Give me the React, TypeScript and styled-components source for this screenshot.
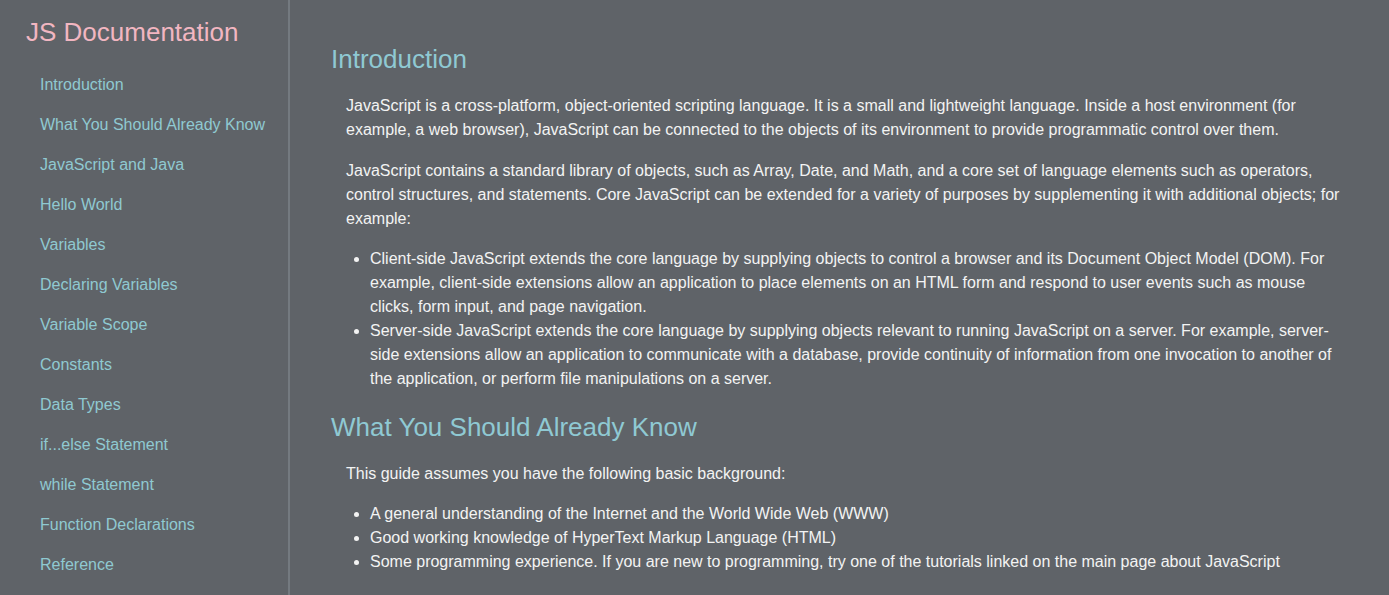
import React from "react";
import styled, { createGlobalStyle } from "styled-components";

const GlobalStyle = createGlobalStyle`
  html, body {
    margin: 0;
    padding: 0;
    background: #5f6368;
    font-family: "Liberation Sans", Arial, sans-serif;
    overflow: hidden;
  }
`;

const Layout = styled.div`
  display: grid;
  grid-template-columns: 290px 1fr;
  height: 595px;
  overflow: hidden;
`;

const Sidebar = styled.nav`
  border-right: 2px solid #747a80;
  padding-top: 17px;
  box-sizing: border-box;
  height: 100%;
`;

const Brand = styled.h1`
  margin: 0 0 18px 26px;
  font-size: 26px;
  line-height: 30px;
  font-weight: 400;
  color: #f2b6c1;
`;

const NavList = styled.ul`
  list-style: none;
  margin: 0;
  padding: 0;
`;

const NavLink = styled.a`
  display: block;
  padding: 8px 0 8px 40px;
  font-size: 16px;
  line-height: 24px;
  color: #8fc9d1;
  text-decoration: none;
`;

const Main = styled.main`
  padding: 44px 39px 0 41px;
  overflow: hidden;
  color: #f3f3f3;
`;

const Section = styled.section`
  & + & {
    margin-top: 20.5px;
  }
`;

const Heading = styled.h2`
  margin: 0 0 20px;
  font-size: 26px;
  line-height: 30px;
  font-weight: 400;
  color: #8fc9d3;
`;

const Para = styled.p`
  margin: 0 0 16.5px 15px;
  font-size: 16px;
  line-height: 24px;
`;

const Bullets = styled.ul`
  margin: 0 0 0 15px;
  padding-left: 24px;
  font-size: 16px;
  line-height: 24px;
`;

const navItems = [
  "Introduction",
  "What You Should Already Know",
  "JavaScript and Java",
  "Hello World",
  "Variables",
  "Declaring Variables",
  "Variable Scope",
  "Constants",
  "Data Types",
  "if...else Statement",
  "while Statement",
  "Function Declarations",
  "Reference",
];

export default function App() {
  return (
    <>
      <GlobalStyle />
      <Layout>
        <Sidebar>
          <Brand>JS Documentation</Brand>
          <NavList>
            {navItems.map((item) => (
              <li key={item}>
                <NavLink href={"#" + item.replace(/\W+/g, "_")}>{item}</NavLink>
              </li>
            ))}
          </NavList>
        </Sidebar>
        <Main>
          <Section id="Introduction">
            <Heading>Introduction</Heading>
            <Para>
              JavaScript is a cross-platform, object-oriented scripting language. It is a small and lightweight
              language. Inside a host environment (for example, a web browser), JavaScript can be connected to the
              objects of its environment to provide programmatic control over them.
            </Para>
            <Para>
              JavaScript contains a standard library of objects, such as Array, Date, and Math, and a core set of
              language elements such as operators, control structures, and statements. Core JavaScript can be extended
              for a variety of purposes by supplementing it with additional objects; for example:
            </Para>
            <Bullets>
              <li>
                Client-side JavaScript extends the core language by supplying objects to control a browser and its
                Document Object Model (DOM). For example, client-side extensions allow an application to place elements
                on an HTML form and respond to user events such as mouse clicks, form input, and page navigation.
              </li>
              <li>
                Server-side JavaScript extends the core language by supplying objects relevant to running JavaScript on
                a server. For example, server-side extensions allow an application to communicate with a database,
                provide continuity of information from one invocation to another of the application, or perform file
                manipulations on a server.
              </li>
            </Bullets>
          </Section>
          <Section id="What_You_Should_Already_Know">
            <Heading>What You Should Already Know</Heading>
            <Para>This guide assumes you have the following basic background:</Para>
            <Bullets>
              <li>A general understanding of the Internet and the World Wide Web (WWW)</li>
              <li>Good working knowledge of HyperText Markup Language (HTML)</li>
              <li>
                Some programming experience. If you are new to programming, try one of the tutorials linked on the main
                page about JavaScript
              </li>
            </Bullets>
          </Section>
        </Main>
      </Layout>
    </>
  );
}
